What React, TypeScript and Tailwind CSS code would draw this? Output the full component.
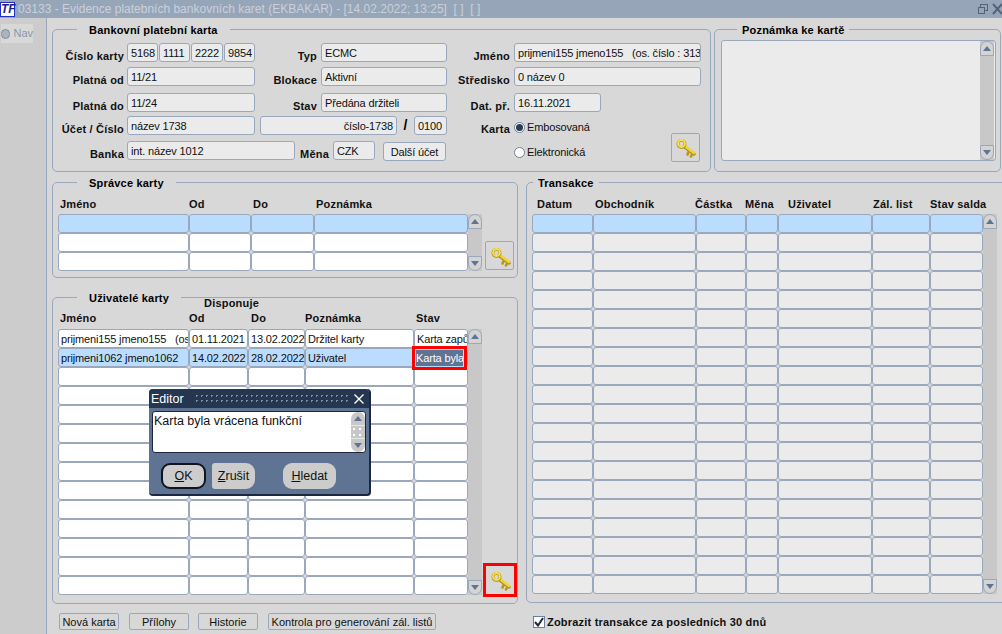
import type { ReactNode } from 'react';

const font = { fontFamily: '"Liberation Sans", Arial, sans-serif' };

function Key({ size = 22 }: { size?: number }) {
  return (
    <svg width={size} height={size} viewBox="0 0 22 22">
      <g fill="none" strokeLinecap="round">
        <path d="M10 10.5 L20 18" stroke="#a88a14" strokeWidth="3.4" />
        <path d="M15 15 L13.5 18.5 M18.5 17.5 L17 20.5" stroke="#b8961a" strokeWidth="2.6" />
        <path d="M10 9.5 L20 17" stroke="#f2d435" strokeWidth="2.6" />
        <circle cx="7.5" cy="8" r="3.6" stroke="#b8961a" strokeWidth="2.8" />
        <circle cx="7.5" cy="7.5" r="3.5" stroke="#f7e04e" strokeWidth="1.8" />
      </g>
    </svg>
  );
}

function Group({ title, className, legend, children }: { title: string; className: string; legend: string; children: ReactNode }) {
  return (
    <div className={`border border-[#9aa8bd] rounded-[5px] ${className}`}>
      <div className={`-mt-[8px] w-fit h-[14px] bg-[#d8d8d8] text-[11px] leading-[16px] font-bold text-black tracking-[0.2px] ${legend}`}>{title}</div>
      {children}
    </div>
  );
}

function Label({ className, children }: { className: string; children: ReactNode }) {
  return <div className={`shrink-0 h-[19px] text-right text-[11px] font-bold text-[#111] tracking-[0.2px] leading-[17px] pt-[5px] whitespace-nowrap ${className}`}>{children}</div>;
}

function Field({ className, children }: { className: string; children?: ReactNode }) {
  return (
    <div className={`shrink-0 h-[19px] border border-[#9aa8bd] rounded-[3px] bg-[#ebebeb] px-[3px] text-[11px] tracking-[-0.15px] leading-[18px] text-[#111] overflow-hidden whitespace-pre ${className}`}>
      {children}
    </div>
  );
}

function Arrow({ up }: { up?: boolean }) {
  return (
    <svg width="8" height="5" viewBox="0 0 8 5">
      <path d={up ? 'M4 0 L8 5 L0 5 Z' : 'M0 0 L8 0 L4 5 Z'} fill="#5f7392" />
    </svg>
  );
}

function Scroll({ className }: { className: string }) {
  return (
    <div className={`w-[14px] shrink-0 flex flex-col bg-[#c8c8c8] ${className}`}>
      <div className="h-[15px] border border-[#9aa8bd] rounded-t-[7px] bg-[#d4d4d4] flex items-center justify-center"><Arrow up /></div>
      <div className="flex-1" />
      <div className="h-[15px] border border-[#9aa8bd] rounded-b-[7px] bg-[#d4d4d4] flex items-center justify-center"><Arrow /></div>
    </div>
  );
}

function KeyButton({ className }: { className?: string }) {
  return (
    <div className={`w-[29px] h-[29px] shrink-0 border border-[#9aa8bd] rounded-[2px] bg-[#d8d8d8] flex items-center justify-center ${className ?? ''}`}>
      <Key />
    </div>
  );
}

function Table({ cols, rows, bg, hi, cells }: { cols: number[]; rows: number; bg: string; hi?: number; cells?: Record<number, string[]> }) {
  return (
    <div className="shrink-0">
      {Array.from({ length: rows }).map((_, r) => (
        <div key={r} className="flex">
          {cols.map((w, c) => (
            <div
              key={c}
              style={{ width: w, backgroundColor: r === (hi ?? 0) ? '#b9dcff' : bg }}
              className="h-[19px] shrink-0 border border-[#9aa8bd] rounded-[3px] px-[2px] text-[11px] tracking-[-0.15px] leading-[18px] text-[#111] overflow-hidden whitespace-pre"
            >
              {cells?.[r]?.[c]}
            </div>
          ))}
        </div>
      ))}
    </div>
  );
}

function Head({ cols, labels, className }: { cols: number[]; labels: string[]; className: string }) {
  return (
    <div className={`flex h-[14px] text-[11px] leading-[14px] font-bold text-[#111] tracking-[0.2px] ${className}`}>
      {cols.map((w, i) => (
        <div key={i} style={{ width: w }} className="shrink-0 whitespace-nowrap">{labels[i]}</div>
      ))}
    </div>
  );
}

function FootButton({ className, children }: { className: string; children: ReactNode }) {
  return (
    <div className={`h-[17px] shrink-0 border border-[#9aa8bd] rounded-[2px] text-center text-[11px] leading-[17px] text-[#111] overflow-hidden whitespace-nowrap ${className}`}>
      {children}
    </div>
  );
}

function Radio({ on }: { on?: boolean }) {
  return (
    <div className="w-[11px] h-[11px] rounded-full border border-[#6f7f99] bg-white flex items-center justify-center shrink-0">
      {on && <div className="w-[7px] h-[7px] rounded-full bg-[#2b3a55]" />}
    </div>
  );
}

function DialogButton({ className, letter, rest }: { className: string; letter: string; rest: string }) {
  return (
    <div className={`h-[26px] shrink-0 bg-[#cccccc] rounded-[9px] flex items-center justify-center text-[12.5px] text-[#111] ${className}`}>
      <span className="underline">{letter}</span>{rest}
    </div>
  );
}

const adminCols = [131, 62, 63, 154];
const userCols = [131, 59, 57, 109, 54];
const txCols = [61, 103, 50, 32, 94, 58, 53];

const userCells: Record<number, string[]> = {
  0: ['prijmeni155 jmeno155   (os. číslo : 313)', '01.11.2021', '13.02.2022', 'Držitel karty', 'Karta zapůjčena'],
  1: ['prijmeni1062 jmeno1062', '14.02.2022', '28.02.2022', 'Uživatel', ''],
};

export default function App() {
  return (
    <div className="relative w-[1002px] h-[634px] overflow-hidden bg-[#d8d8d8] flex flex-col" style={font}>
      {/* Title bar */}
      <div className="h-[18px] shrink-0 bg-[#97a5b9] flex items-center">
        <div className="w-[15px] h-[15px] bg-white border border-[#2030c0] text-[12px] leading-[13px] font-bold italic text-[#1a1f8f] text-center">TF</div>
        <div className="ml-[3px] text-[12px] text-[#c9d1dc] whitespace-pre">03133 - Evidence platebních bankovních karet (EKBAKAR) - [14.02.2022; 13:25]  [ ]  [ ]</div>
        <div className="ml-auto flex items-center gap-[3px]">
          <svg width="12" height="12" viewBox="0 0 12 12" fill="none" stroke="#55637a" strokeWidth="1">
            <rect x="3.5" y="1.5" width="7" height="6" />
            <rect x="1.5" y="4.5" width="6" height="6" fill="#97a5b9" />
          </svg>
          <svg width="10" height="12" viewBox="0 0 10 12" fill="none" stroke="#55637a" strokeWidth="2">
            <path d="M1 1 L10 11 M10 1 L1 11" />
          </svg>
        </div>
      </div>

      <div className="flex flex-1 min-h-0">
        {/* Nav rail */}
        <div className="w-[47px] shrink-0 bg-[#cccccc] border-r border-[#9aa8bd] pt-[6px] pl-[1px]">
          <div className="w-[32px] h-[19px] bg-[#d8d8d8] flex items-center gap-[3px] text-[11px] text-[#8b97a8]">
            <div className="w-[10px] h-[10px] rounded-full bg-[#a9b3c1] border border-[#7f8ea5]" />
            Nav
          </div>
        </div>

        {/* Canvas */}
        <div className="flex-1 min-w-0 pl-[5px] pt-[11px]">
          <div className="flex">
            <Group title="Bankovní platební karta" legend="ml-[24px] px-[12px]" className="w-[659px] h-[143px] shrink-0">
              <div className="pt-[7px]">
                <div className="flex">
                  <Label className="w-[71px]">Číslo karty</Label>
                  <div className="ml-[3px] flex w-[128px] gap-[1px]">
                    <Field className="w-[31px]">5168</Field>
                    <Field className="w-[31px]">1111</Field>
                    <Field className="w-[32px]">2222</Field>
                    <Field className="w-[31px]">9854</Field>
                  </div>
                  <Label className="w-[62px]">Typ</Label>
                  <Field className="ml-[4px] w-[126px]">ECMC</Field>
                  <Label className="w-[63px]">Jméno</Label>
                  <Field className="ml-[4px] w-[187px]">prijmeni155 jmeno155   (os. číslo : 313)</Field>
                </div>
                <div className="flex mt-[5px]">
                  <Label className="w-[71px]">Platná od</Label>
                  <Field className="ml-[3px] w-[128px]">11/21</Field>
                  <Label className="w-[62px]">Blokace</Label>
                  <Field className="ml-[4px] w-[126px]">Aktivní</Field>
                  <Label className="w-[63px]">Středisko</Label>
                  <Field className="ml-[4px] w-[187px]">0 název 0</Field>
                </div>
                <div className="flex mt-[7px]">
                  <Label className="w-[71px]">Platná do</Label>
                  <Field className="ml-[3px] w-[128px]">11/24</Field>
                  <Label className="w-[62px]">Stav</Label>
                  <Field className="ml-[4px] w-[126px]">Předána držiteli</Field>
                  <Label className="w-[63px]">Dat. př.</Label>
                  <Field className="ml-[4px] w-[87px]">16.11.2021</Field>
                </div>
                <div className="flex items-end">
                  <div>
                    <div className="flex mt-[4px]">
                      <Label className="w-[71px]">Účet / Číslo</Label>
                      <Field className="ml-[3px] w-[128px]">název 1738</Field>
                      <Field className="ml-[5px] w-[137px] text-right">číslo-1738</Field>
                      <div className="w-[17px] text-center text-[14px] font-bold leading-[18px]">/</div>
                      <Field className="w-[33px]">0100</Field>
                      <Label className="w-[63px]">Karta</Label>
                      <div className="ml-[4px] pt-[3px] flex items-center gap-[2px] text-[11px] tracking-[-0.15px] text-[#111]"><Radio on />Embosovaná</div>
                    </div>
                    <div className="flex mt-[5px]">
                      <Label className="w-[71px]">Banka</Label>
                      <Field className="ml-[3px] w-[168px]">int. název 1012</Field>
                      <Label className="w-[34px]">Měna</Label>
                      <Field className="ml-[4px] w-[42px]">CZK</Field>
                      <Field className="ml-[8px] w-[63px] mt-[1px] h-[17px] bg-[#d8d8d8] text-center leading-[15px]">Další účet</Field>
                      <div className="ml-[68px] pt-[3px] flex items-center gap-[2px] text-[11px] tracking-[-0.15px] text-[#111]"><Radio />Elektronická</div>
                    </div>
                  </div>
                  <KeyButton className="ml-[81px] mb-[-1px]" />
                </div>
              </div>
            </Group>

            <Group title="Poznámka ke kartě" legend="ml-[22px] px-[5px]" className="ml-[3px] w-[287px] h-[143px] shrink-0">
              <div className="ml-[6px] mt-[4px] w-[275px] h-[121px] border border-[#9aa8bd] rounded-[3px] bg-[#ebebeb] flex justify-end">
                <Scroll className="h-full mr-[1px]" />
              </div>
            </Group>
          </div>

          <div className="flex mt-[10px]">
            <div className="w-[466px] shrink-0">
              <Group title="Správce karty" legend="ml-[24px] px-[12px]" className="h-[96px]">
                <div className="pl-[5px] pt-[8px]">
                  <Head cols={[129, 64, 63, 154]} labels={['Jméno', 'Od', 'Do', 'Poznámka']} className="pl-[2px]" />
                  <div className="flex items-end mt-[3px]">
                    <Table cols={adminCols} rows={3} bg="#ffffff" />
                    <Scroll className="h-[57px]" />
                    <KeyButton className="ml-[3px] mb-[1px]" />
                  </div>
                </div>
              </Group>

              <Group title="Uživatelé karty" legend="ml-[24px] px-[12px]" className="mt-[19px] h-[307px]">
                <div className="pl-[5px]">
                  <div className="ml-[146px] -mt-[8px] h-[14px] text-[11px] leading-[14px] font-bold text-[#111] tracking-[0.2px]">Disponuje</div>
                  <Head cols={[129, 62, 54, 111, 54]} labels={['Jméno', 'Od', 'Do', 'Poznámka', 'Stav']} className="pl-[2px] mt-[1px]" />
                  <div className="flex items-end mt-[4px]">
                    <Table cols={userCols} rows={14} bg="#ffffff" hi={1} cells={userCells} />
                    <Scroll className="h-[266px]" />
                    <div className="ml-[1px] -mb-[2px] border-[3px] border-[#ff0000] w-[34px] h-[34px] shrink-0 flex items-center justify-center bg-[#d8d8d8]">
                      <Key />
                    </div>
                  </div>
                </div>
              </Group>

              <div className="flex mt-[9px] ml-[7px]">
                <FootButton className="w-[60px]">Nová karta</FootButton>
                <FootButton className="ml-[10px] w-[60px]">Přílohy</FootButton>
                <FootButton className="ml-[9px] w-[60px]">Historie</FootButton>
                <FootButton className="ml-[10px] w-[168px]">Kontrola pro generování zál. listů</FootButton>
              </div>
            </div>

            <div className="ml-[8px] w-[490px] shrink-0">
              <Group title="Transakce" legend="ml-[6px] px-[5px]" className="h-[421px]">
                <div className="pl-[5px] pt-[8px]">
                  <Head cols={[58, 100, 50, 43, 85, 57, 60]} labels={['Datum', 'Obchodník', 'Částka', 'Měna', 'Uživatel', 'Zál. list', 'Stav salda']} className="pl-[5px]" />
                  <div className="flex mt-[3px]">
                    <Table cols={txCols} rows={20} bg="#ebebeb" />
                    <Scroll className="h-[380px]" />
                  </div>
                </div>
              </Group>
              <div className="flex items-center mt-[11px] ml-[7px] gap-[2px] text-[11px] font-bold text-[#111] tracking-[0.2px]">
                <div className="w-[12px] h-[12px] border border-[#6f7f99] bg-white flex items-center justify-center shrink-0">
                  <svg width="10" height="10" viewBox="0 0 10 10" fill="none" stroke="#1c2740" strokeWidth="2"><path d="M1 5 L4 8.5 L9 1" /></svg>
                </div>
                Zobrazit transakce za posledních 30 dnů
              </div>
            </div>
          </div>
        </div>
      </div>

      {/* Focused cell, outlined in red over the table */}
      <div className="absolute left-[412px] top-[346px] w-[55px] h-[24px] border-[3px] border-[#ff0000] bg-[#b9dcff] p-[1px] overflow-hidden">
        <div className="bg-[#5f7392] text-white text-[11px] tracking-[-0.15px] leading-[16px] h-full whitespace-nowrap overflow-hidden">Karta byla</div>
      </div>

      {/* Editor dialog */}
      <div className="absolute left-[149px] top-[389px] w-[222px] h-[107px] bg-[#5f7392] rounded-[4px] border-r-2 border-b-2 border-[#1c2740] flex flex-col">
        <div className="h-[19px] bg-[#243650] rounded-t-[4px] flex items-center text-white text-[12.5px] leading-[20px] pl-[2px]">
          <span className="pt-[1px]">Editor</span>
          <div className="ml-[10px] w-[155px] h-[12px] bg-[radial-gradient(circle,#7f8ea5_1px,transparent_1px)] bg-[length:5px_5px]" />
          <svg className="ml-auto mr-[5px]" width="10" height="10" viewBox="0 0 10 10" stroke="#ffffff" strokeWidth="1.4"><path d="M0.5 0.5 L9.5 9.5 M9.5 0.5 L0.5 9.5" /></svg>
        </div>
        <div className="mx-[3px] mt-[3px] h-[42px] bg-white border border-[#1c2740] rounded-[3px] flex text-[12.5px] leading-[16px] text-[#111]">
          <div className="flex-1 px-[1px] pt-[1px] whitespace-nowrap">Karta byla vrácena funkční</div>
          <div className="w-[14px] bg-[#c8c8c8] flex flex-col rounded-[7px] overflow-hidden">
            <div className="h-[14px] flex items-center justify-center border-b border-[#e8e8e8]"><Arrow up /></div>
            <div className="flex-1 bg-[#c8c8c8] bg-[radial-gradient(circle,#ffffff_1px,transparent_1px)] bg-[length:6px_6px]" />
            <div className="h-[14px] flex items-center justify-center border-t border-[#e8e8e8]"><Arrow /></div>
          </div>
        </div>
        <div className="flex mt-[10px] ml-[12px]">
          <DialogButton className="w-[45px] border-2 border-[#10141f]" letter="O" rest="K" />
          <DialogButton className="ml-[6px] w-[43px] rounded-l-[3px]" letter="Z" rest="rušit" />
          <DialogButton className="ml-[28px] w-[53px]" letter="H" rest="ledat" />
        </div>
      </div>
    </div>
  );
}
